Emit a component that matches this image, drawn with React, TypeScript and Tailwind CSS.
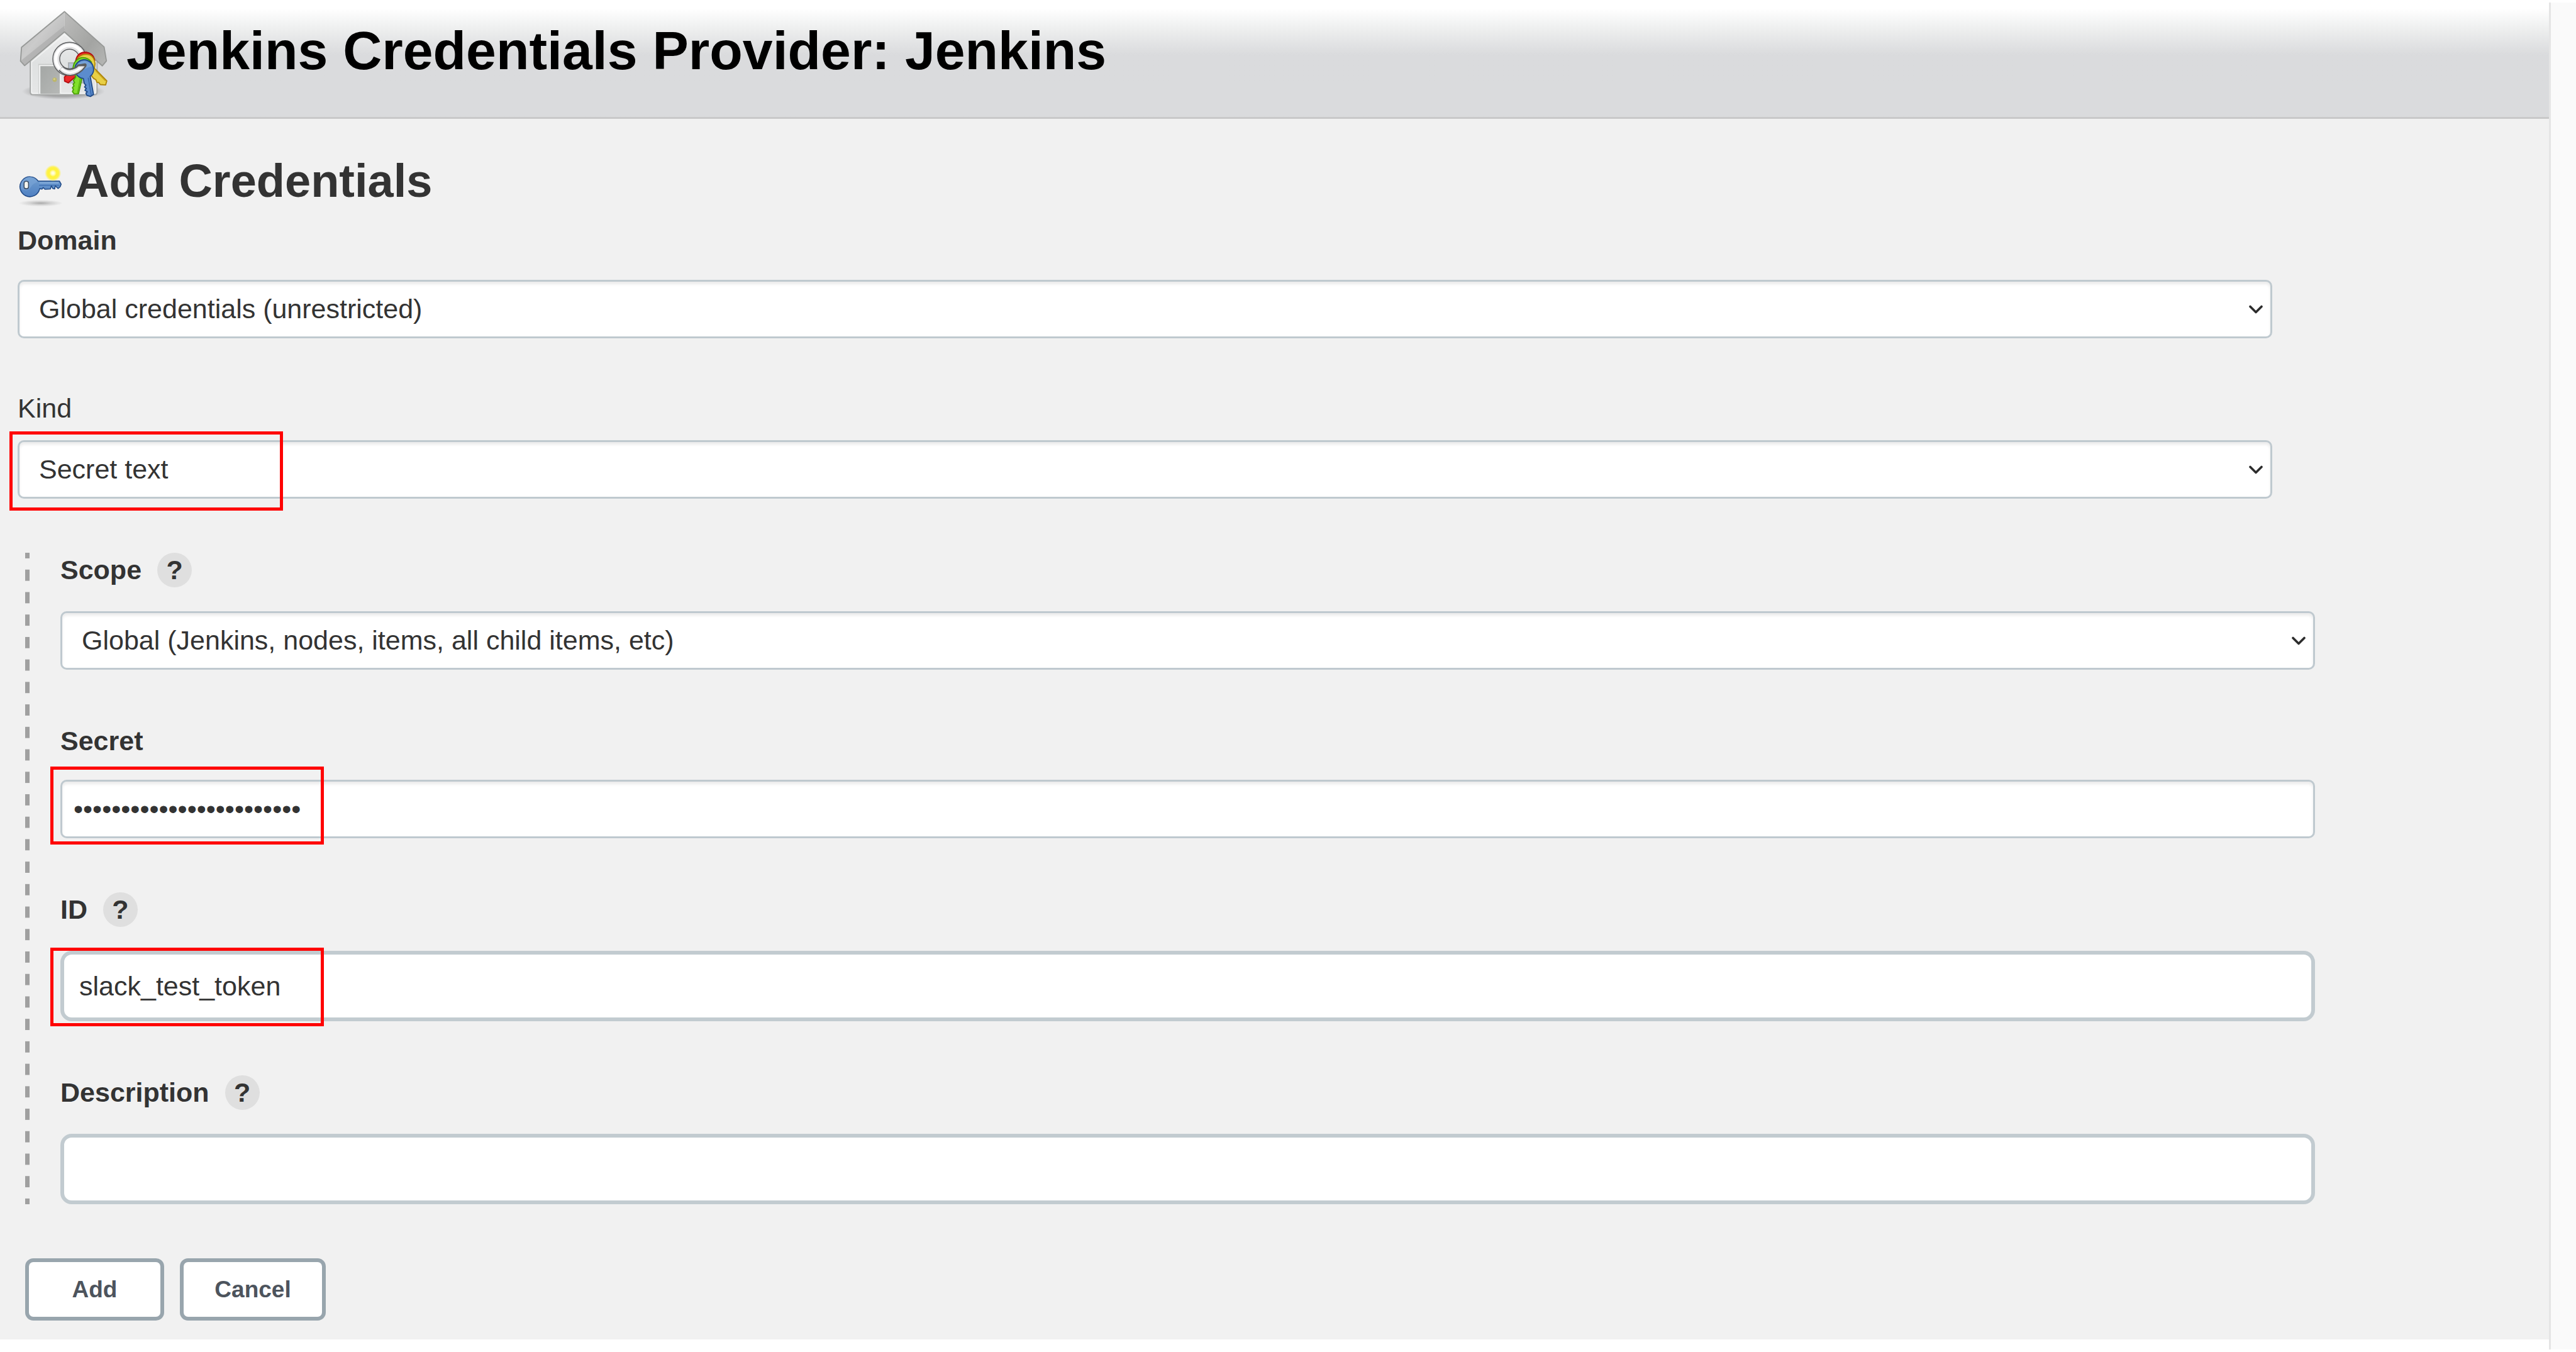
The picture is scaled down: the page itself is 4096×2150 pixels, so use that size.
import type { ReactNode } from "react";

function HouseKeysIcon() {
  return (
    <svg viewBox="90 48 464 464" className="size-[144px] shrink-0" aria-hidden="true">
      <defs>
        <linearGradient id="roofLeft" x1="0" y1="0" x2="1" y2="1">
          <stop offset="0" stopColor="#b4b5b4" />
          <stop offset="0.45" stopColor="#cbcbcb" />
          <stop offset="1" stopColor="#aaabaa" />
        </linearGradient>
        <linearGradient id="roofRight" x1="0" y1="0" x2="1" y2="1">
          <stop offset="0" stopColor="#bdbdbc" />
          <stop offset="0.6" stopColor="#a3a4a2" />
          <stop offset="1" stopColor="#b6b7b5" />
        </linearGradient>
        <linearGradient id="wall" x1="0" y1="0" x2="0" y2="1">
          <stop offset="0" stopColor="#f1f1f1" />
          <stop offset="0.5" stopColor="#dfe1e1" />
          <stop offset="1" stopColor="#e6e7e7" />
        </linearGradient>
        <linearGradient id="door" x1="0" y1="0" x2="1" y2="1">
          <stop offset="0" stopColor="#a4a7a5" />
          <stop offset="1" stopColor="#b6b8b6" />
        </linearGradient>
        <radialGradient id="houseShadow">
          <stop offset="0.6" stopColor="#777" stopOpacity="0.55" />
          <stop offset="1" stopColor="#777" stopOpacity="0" />
        </radialGradient>
      </defs>
      <ellipse cx="325" cy="468" rx="212" ry="42" fill="url(#houseShadow)" />
      <path d="M330 150 L155 300 V472 Q155 485 168 485 H484 Q497 485 497 472 V300 Z" fill="url(#wall)" stroke="#a5a7a6" strokeWidth="6" />
      <path d="M330 176 L162 318 V470 Q162 478 170 478 H482 Q490 478 490 470 V314 Z" fill="none" stroke="#f4f5f5" strokeWidth="4" />
      <rect x="196" y="327" width="116" height="152" fill="#c9cccb" />
      <path d="M202 479 V336 H310 V479" fill="none" stroke="#f4f4f4" strokeWidth="6" />
      <rect x="208" y="339" width="97" height="141" fill="url(#door)" />
      <circle cx="280" cy="408" r="11" fill="#bdb76a" />
      <circle cx="278" cy="405" r="5" fill="#d8d28c" />
      <rect x="351" y="322" width="76" height="102" fill="#b7c4d6" stroke="#a9adaf" strokeWidth="6" />
      <path d="M330 59 L110 242 L105 313 L126 336 L330 163 Z" fill="url(#roofLeft)" />
      <path d="M330 59 L533 240 L545 312 L524 337 L330 163 Z" fill="url(#roofRight)" />
      <path d="M330 132 L108 310 L126 334 L330 163 Z" fill="#a8a9a8" opacity="0.6" />
      <path d="M330 59 L533 240 L545 312 L524 337 L330 163 L126 336 L105 313 L110 242 Z" fill="none" stroke="#979997" strokeWidth="6" strokeLinejoin="round" />

      <circle cx="356" cy="302" r="68" fill="none" stroke="#5b5d5f" strokeWidth="40" />
      <circle cx="356" cy="302" r="68" fill="none" stroke="#e2e2e3" strokeWidth="31" />
      <circle cx="356" cy="302" r="70" fill="none" stroke="#ffffff" strokeWidth="16" />

      <g strokeLinejoin="round" strokeWidth="6">
        <path d="M388 310 Q396 268 436 267 Q478 270 485 310 L440 350 L388 392 L349 424 L331 416 L330 394 L372 358 Z" fill="#ee2a2a" stroke="#b50d10" />
        <path d="M398 296 Q424 272 458 280 Q484 292 487 326 L484 350 L547 414 L541 435 L514 433 L505 422 L496 421 L491 408 L480 402 L462 380 L420 340 Z" fill="#e8cf45" stroke="#ae8509" />
        <path d="M490 362 L540 414" stroke="#c5a11c" strokeWidth="5" fill="none" />
        <path d="M374 352 Q376 305 418 295 Q450 292 468 318 L446 360 L420 400 L402 480 L380 481 L371 469 L376 458 L371 449 L379 440 L374 431 L382 423 L376 412 L388 394 Z" fill="#82e02b" stroke="#4c9f08" />
        <path d="M412 398 L397 476" stroke="#5cb613" strokeWidth="5" fill="none" />
        <path d="M384 362 A48 48 0 1 1 462 391 L479 484 L463 494 L445 488 L440 477 L447 470 L435 462 L442 453 L433 445 L440 436 L432 428 L427 402 A48 48 0 0 1 384 362 Z" fill="#5b8cce" stroke="#204a87" />
        <path d="M390 345 A43 43 0 0 1 472 340 Q430 348 398 382 Q388 364 390 345 Z" fill="#7fa9dc" opacity="0.7" stroke="none" />
        <path d="M452 398 L467 486" stroke="#3a6cb0" strokeWidth="6" fill="none" />
      </g>

      <path d="M300 361 Q328 390 362 389 Q414 384 443 338 Q446 324 434 324 Q416 328 398 330 Q386 350 358 353 Q338 353 323 339 Z" fill="#5b5d5f" />
      <path d="M304 357 Q330 384 361 383 Q404 380 434 340 Q420 338 402 340 Q386 357 358 359 Q336 359 320 343 Z" fill="#e4e4e5" />
      <path d="M311 354 Q332 374 360 375 Q396 371 420 345 L406 346 Q386 364 358 367 Q336 365 317 348 Z" fill="#ffffff" />
    </svg>
  );
}

function NewKeyIcon() {
  return (
    <svg viewBox="90 30 232 232" className="mt-[15px] size-[72px] shrink-0" aria-hidden="true">
      <defs>
        <radialGradient id="keyShadow">
          <stop offset="0" stopColor="#000" stopOpacity="0.3" />
          <stop offset="0.5" stopColor="#000" stopOpacity="0.12" />
          <stop offset="1" stopColor="#000" stopOpacity="0" />
        </radialGradient>
        <radialGradient id="spark">
          <stop offset="0" stopColor="#fffff0" />
          <stop offset="0.2" stopColor="#fffbc0" />
          <stop offset="0.45" stopColor="#fff33a" />
          <stop offset="0.72" stopColor="#fff24a" />
          <stop offset="1" stopColor="#fff24a" stopOpacity="0" />
        </radialGradient>
        <linearGradient id="keyBlue" x1="0" y1="0" x2="0" y2="1">
          <stop offset="0" stopColor="#729fcf" />
          <stop offset="1" stopColor="#4f80c2" />
        </linearGradient>
      </defs>
      <ellipse cx="208" cy="230" rx="114" ry="17" fill="url(#keyShadow)" />
      <path
        d="M195 117 H304 L313 133 L308 146 L297 155 L289 147 L283 140 L280 157 L270 155 L263 140 L258 157 L230 159 L221 150 L215 158 L203 156 A51 51 0 1 1 195 117 Z"
        fill="url(#keyBlue)"
        stroke="#204a87"
        strokeWidth="5"
        strokeLinejoin="round"
      />
      <path d="M110 160 A46 46 0 1 1 194 122 Q168 128 156 150 Q146 170 110 160 Z" fill="#7ea8d8" opacity="0.55" />
      <path d="M202 126 H300" stroke="#86aedb" strokeWidth="6" />
      <path d="M200 138 H304" stroke="#3f70b3" strokeWidth="4" />
      <rect x="123" y="118" width="23" height="38" rx="10" fill="#f5f5ef" stroke="#3c4f66" strokeWidth="5" />
      <circle cx="271" cy="76" r="42" fill="url(#spark)" />
    </svg>
  );
}

function Highlight({ className }: { className: string }) {
  return (
    <div className={`pointer-events-none absolute w-[435px] border-5 border-[#ff0000] ${className}`} />
  );
}

function HelpButton({ topic }: { topic: string }) {
  return (
    <button
      type="button"
      title={`Help for feature: ${topic}`}
      className="flex size-[55px] items-center justify-center rounded-full bg-[#dfdfdf] text-[43px] font-bold leading-[55px]"
    >
      ?
    </button>
  );
}

function FieldLabel({ id, text, help }: { id: string; text: string; help?: boolean }) {
  return (
    <div className="flex items-start gap-[25px]">
      <label htmlFor={id} className="text-[43px] font-bold leading-[54px]">
        {text}
      </label>
      {help && <HelpButton topic={text} />}
    </div>
  );
}

function SelectBox({ id, value, children }: { id: string; value: string; children?: ReactNode }) {
  return (
    <div className="relative">
      <select
        id={id}
        className="block h-[93px] w-full appearance-none rounded-[10px] border-3 border-[#bfc9cf] bg-white px-[31px] text-[43px] shadow-[inset_0_4px_4px_rgba(0,0,0,0.08)]"
      >
        <option>{value}</option>
      </select>
      <svg
        viewBox="0 0 22 14"
        className="pointer-events-none absolute right-[15px] top-1/2 h-[14px] w-[22px] -translate-y-1/2"
        fill="none"
        stroke="#2b2b2b"
        strokeWidth="3.6"
        strokeLinecap="round"
        strokeLinejoin="round"
        aria-hidden="true"
      >
        <path d="M2 2.5 L11 11.5 L20 2.5" />
      </svg>
      {children}
    </div>
  );
}

const wideInput =
  "block h-[112px] w-full rounded-[18px] border-6 border-[#c2cbd0] bg-white px-[24px] text-[43px] outline-none";

const formButton =
  "h-[99px] rounded-[13px] border-6 border-[#98a5ad] bg-white text-[37px] font-bold text-[#4d545d]";

export default function App() {
  return (
    <div className="flex min-h-screen bg-white font-['Liberation_Sans',Arial,sans-serif] text-[#333333]">
      <main className="min-w-0 flex-1">
        <header className="flex h-[189px] items-start gap-[29px] border-b-3 border-[#c8c8c9] bg-linear-to-b from-white from-[14px] via-[#eeefef] via-[45px] to-[#dadbdd] to-[87px] pl-[28px] pt-[15px]">
          <HouseKeysIcon />
          <h1 className="mt-[17px] text-[86px] font-bold leading-[96px] text-black">
            Jenkins Credentials Provider: Jenkins
          </h1>
        </header>

        <form className="bg-[#f1f1f1] pb-[30px] pl-[28px] pt-[57px]" onSubmit={(e) => e.preventDefault()}>
          <div className="flex items-start gap-[20px]">
            <NewKeyIcon />
            <h2 className="text-[74px] font-bold leading-[84px]">Add Credentials</h2>
          </div>

          <div className="mr-[440px]">
            <div className="mt-[22px] flex flex-col gap-[36px]">
              <FieldLabel id="domain" text="Domain" />
              <SelectBox id="domain" value="Global credentials (unrestricted)" />
            </div>
            <div className="mt-[84px] flex flex-col gap-[24px]">
              <label htmlFor="kind" className="text-[43px] leading-[54px]">
                Kind
              </label>
              <SelectBox id="kind" value="Secret text">
                <Highlight className="-left-[13px] -top-[14px] h-[126px]" />
              </SelectBox>
            </div>
          </div>

          <div className="ml-[12px] mr-[372px] mt-[86px] flex gap-[49px]">
            <div className="w-[7px] bg-[linear-gradient(#a0a0a0_26%,transparent_26%,transparent_74%,#a0a0a0_74%)] bg-[length:7px_36px] bg-repeat-round" />
            <div className="flex min-w-0 flex-1 flex-col gap-[86px]">
              <div className="flex flex-col gap-[38px]">
                <FieldLabel id="scope" text="Scope" help />
                <SelectBox id="scope" value="Global (Jenkins, nodes, items, all child items, etc)" />
              </div>
              <div className="flex flex-col gap-[35px]">
                <FieldLabel id="secret" text="Secret" />
                <div className="relative">
                  <input
                    id="secret"
                    type="password"
                    defaultValue="abcdefghijklmnopqrstuvwx"
                    className="block h-[93px] w-full rounded-[10px] border-3 border-[#bfc9cf] bg-white px-[18px] text-[43px] shadow-[inset_0_4px_4px_rgba(0,0,0,0.08)] outline-none"
                  />
                  <Highlight className="-left-[16px] -top-[21px] h-[124px]" />
                </div>
              </div>
              <div className="flex flex-col gap-[38px]">
                <FieldLabel id="credential-id" text="ID" help />
                <div className="relative">
                  <input id="credential-id" type="text" defaultValue="slack_test_token" className={wideInput} />
                  <Highlight className="-left-[16px] -top-[5px] h-[125px]" />
                </div>
              </div>
              <div className="flex flex-col gap-[38px]">
                <FieldLabel id="description" text="Description" help />
                <input id="description" type="text" className={wideInput} />
              </div>
            </div>
          </div>

          <div className="ml-[12px] mt-[86px] flex gap-[25px]">
            <button type="submit" className={`w-[221px] ${formButton}`}>
              Add
            </button>
            <button type="button" className={`w-[232px] ${formButton}`}>
              Cancel
            </button>
          </div>
        </form>
      </main>
      <aside className="my-[4px] w-[43px] border-l-3 border-[#e5e5e5] bg-[#fafafa]" />
    </div>
  );
}
